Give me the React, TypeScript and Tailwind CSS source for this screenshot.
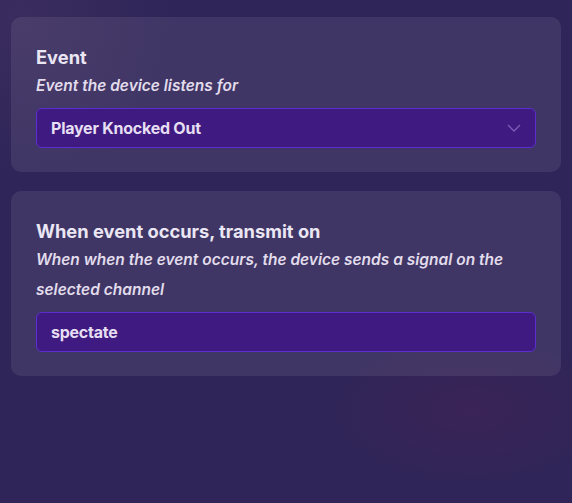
import React from 'react';

function Field({
  title,
  description,
  children,
}: {
  title: string;
  description: string;
  children: React.ReactNode;
}) {
  return (
    <div className="rounded-[10px] bg-[#ffffff14] px-[25px] pt-[26px] pb-[24px]">
      <h2 className="text-[18.3px] leading-[28px] font-bold text-[#ebe6f3]">{title}</h2>
      <p className="text-[15.5px] leading-[30px] font-semibold italic text-[#e2dcec]">{description}</p>
      <div className="mt-[7px]">{children}</div>
    </div>
  );
}

export default function App() {
  return (
    <div
      className="min-h-[503px] w-full bg-[#2f2558] px-[11px] pt-[17px] bg-[radial-gradient(ellipse_150px_80px_at_470px_410px,#3b2457_0%,transparent_100%),radial-gradient(circle_at_20px_20px,#3a2c5e_0%,transparent_160px)]"
      style={{ fontFamily: 'Inter, "Noto Sans", sans-serif' }}
    >
      <div className="flex flex-col gap-[19px]">
        <Field title="Event" description="Event the device listens for">
          <div className="flex h-[40px] items-center justify-between rounded-[6px] border border-[#5b2ed0] bg-[#3f1a80] pl-[14px] pr-[14px]">
            <span className="text-[16px] font-bold tracking-[-0.015em] text-[#e6def3]">Player Knocked Out</span>
            <svg width="14" height="9" viewBox="0 0 14 9" fill="none">
              <path d="M1 1l6 6 6-6" stroke="#7c5db8" strokeWidth="1.3" />
            </svg>
          </div>
        </Field>
        <Field
          title="When event occurs, transmit on"
          description="When when the event occurs, the device sends a signal on the selected channel"
        >
          <div className="flex h-[40px] items-center rounded-[6px] border border-[#5b2ed0] bg-[#3f1a80] pl-[14px]">
            <span className="text-[16px] font-bold tracking-[-0.015em] text-[#e6def3]">spectate</span>
          </div>
        </Field>
      </div>
    </div>
  );
}
